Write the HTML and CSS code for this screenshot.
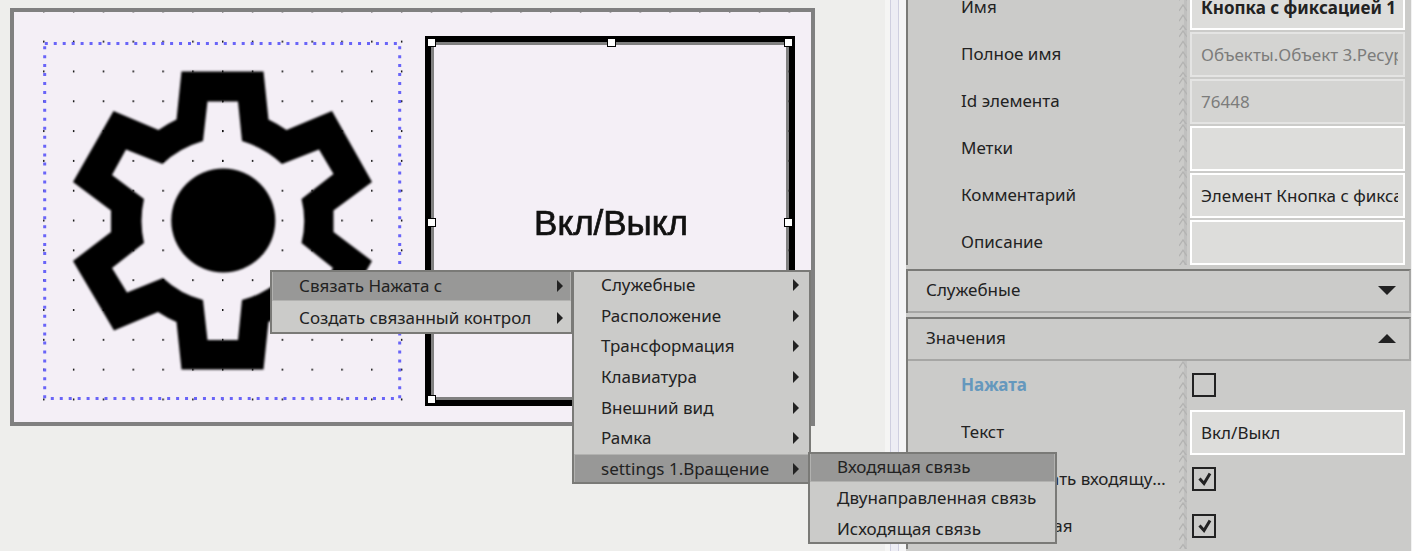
FILE: index.html
```html
<!DOCTYPE html>
<html lang="ru">
<head>
<meta charset="utf-8">
<title>Редактор</title>
<link rel="stylesheet" href="styles.css">
</head>
<body>
<svg class="defs" aria-hidden="true">
  <symbol id="grip" viewBox="0 0 8 47">
    <rect x="5" width="3" height="47" fill="#c0c0bf"/>
    <path fill="none" stroke="#b3b3b2" stroke-width="1.300" d="M0 7L4 1L8 7M0 17.400L4 11.400L8 17.400M0 27.800L4 21.800L8 27.800M0 38.200L4 32.200L8 38.200M0 48L4 42.500L8 48"/>
  </symbol>
</svg>
<div class="app">
  <main class="stage">
    <svg class="surface" width="805" height="418" viewBox="10 8 805 418" role="img" aria-label="Рабочая область">
      <defs>
        <pattern id="dots" x="43.100" y="10.800" width="29.820" height="29.820" patternUnits="userSpaceOnUse">
          <rect width="1.400" height="2" fill="#111"/>
        </pattern>
      </defs>
      <rect x="12" y="10" width="801" height="414" fill="#f4eff6"/>
      <rect x="43" y="40" width="360" height="362" fill="url(#dots)"/>
      <rect x="43" y="11" width="755" height="2" fill="url(#dots)" opacity=".5"/>
      <rect x="12" y="10" width="801" height="414" fill="none" stroke="#808080" stroke-width="4"/>
      <g class="gear">
        <path fill-rule="evenodd" d="M181.500 71.500H263.500L268.500 119.500Q278 124 286.500 130L332 111L372 182L333.500 210.500V232L372 261L332 330.500L286.500 312Q278 318 268.500 322L263.500 369.500H181.500L176.500 322Q167 318 158 312L114 330.500L73 261L111 232V210.500L73 182L113.500 111L158.500 130Q167 124 176.500 119.500ZM207.500 101.500L203 141Q179 148 162.500 164L126 149.500L112 175L144 199Q139 221 144 243L112 268L127 292.500L163 278Q180 294 203 300L207.500 340H238L242 300Q265 294 282 278L319 292L333 268L301.500 243Q307 221 301.500 199L333.500 174L319 149.500L282 164Q265 148 242 141L238 101.500Z"/>
        <circle cx="223.300" cy="220.500" r="52"/>
      </g>
      <rect x="216" y="100" width="12" height="62" fill="url(#dots)"/>
      <g fill="none" stroke="#6964f8" stroke-width="3" stroke-dasharray="3 5.950">
        <path d="M44.800 43.500H398M50.800 398.500H395M44.700 46.200V399M399.700 46.200V399"/>
      </g>
      <rect x="428" y="39" width="364" height="364" fill="#f4eff6" stroke="#000" stroke-width="6"/>
      <rect x="432.500" y="43.500" width="355" height="355" fill="none" stroke="#808080" stroke-width="3"/>
      <rect x="786" y="50" width="5" height="340" fill="url(#dots)"/>
      <text class="caption" x="611" y="235" text-anchor="middle">Вкл/Выкл</text>
      <g fill="#fff" stroke="#000">
        <rect x="427.500" y="38.500" width="8" height="8"/><rect x="607.500" y="38.500" width="8" height="8"/><rect x="784.500" y="38.500" width="8" height="8"/>
        <rect x="427.500" y="218.500" width="8" height="8"/><rect x="784.500" y="218.500" width="8" height="8"/><rect x="427.500" y="395.500" width="8" height="8"/>
      </g>
    </svg>
  </main>
  <div class="splitter"></div>
  <aside class="panel">
    <section class="group first">
      <div class="row"><label for="f1">Имя</label><svg class="grip"><use href="#grip"/></svg><input class="field strong" id="f1" type="text" value="Кнопка с фиксацией 1"></div>
      <div class="row"><label for="f2">Полное имя</label><svg class="grip"><use href="#grip"/></svg><input class="field" id="f2" type="text" value="Объекты.Объект 3.Ресурсы" disabled></div>
      <div class="row"><label for="f3">Id элемента</label><svg class="grip"><use href="#grip"/></svg><input class="field" id="f3" type="text" value="76448" disabled></div>
      <div class="row"><label for="f4">Метки</label><svg class="grip"><use href="#grip"/></svg><input class="field" id="f4" type="text"></div>
      <div class="row"><label for="f5">Комментарий</label><svg class="grip"><use href="#grip"/></svg><input class="field" id="f5" type="text" value="Элемент Кнопка с фиксацией"></div>
      <div class="row"><label for="f6">Описание</label><svg class="grip"><use href="#grip"/></svg><input class="field" id="f6" type="text"></div>
    </section>
    <section class="group">
      <button class="head" type="button">Служебные<svg width="18" height="9" viewBox="0 0 18 9"><path d="M0 0H18L9 9Z"/></svg></button>
    </section>
    <section class="group">
      <button class="head" type="button">Значения<svg width="18" height="9" viewBox="0 0 18 9"><path d="M0 9H18L9 0Z"/></svg></button>
      <div class="row"><label class="linked" for="f7">Нажата</label><svg class="grip"><use href="#grip"/></svg><span class="tick"><input id="f7" type="checkbox"></span></div>
      <div class="row"><label for="f8">Текст</label><svg class="grip"><use href="#grip"/></svg><input class="field" id="f8" type="text" value="Вкл/Выкл"></div>
      <div class="row"><label for="f9">Использовать входящую связь</label><svg class="grip"><use href="#grip"/></svg><span class="tick"><input id="f9" type="checkbox" checked><svg class="mark" viewBox="0 0 24 24"><path d="M7.500 11.500L12 16.500L18 6.500"/></svg></span></div>
      <div class="row"><label for="f10">Управляемая</label><svg class="grip"><use href="#grip"/></svg><span class="tick"><input id="f10" type="checkbox" checked><svg class="mark" viewBox="0 0 24 24"><path d="M7.500 11.500L12 16.500L18 6.500"/></svg></span></div>
    </section>
  </aside>
</div>
<menu class="menu menu-main">
  <li><button class="on" type="button">Связать Нажата с<svg class="arrow" viewBox="0 0 6 12"><path d="M0 0L6 6L0 12Z"/></svg></button></li>
  <li><button type="button">Создать связанный контрол<svg class="arrow" viewBox="0 0 6 12"><path d="M0 0L6 6L0 12Z"/></svg></button></li>
</menu>
<menu class="menu menu-props">
  <li><button type="button">Служебные<svg class="arrow" viewBox="0 0 6 12"><path d="M0 0L6 6L0 12Z"/></svg></button></li>
  <li><button type="button">Расположение<svg class="arrow" viewBox="0 0 6 12"><path d="M0 0L6 6L0 12Z"/></svg></button></li>
  <li><button type="button">Трансформация<svg class="arrow" viewBox="0 0 6 12"><path d="M0 0L6 6L0 12Z"/></svg></button></li>
  <li><button type="button">Клавиатура<svg class="arrow" viewBox="0 0 6 12"><path d="M0 0L6 6L0 12Z"/></svg></button></li>
  <li><button type="button">Внешний вид<svg class="arrow" viewBox="0 0 6 12"><path d="M0 0L6 6L0 12Z"/></svg></button></li>
  <li><button type="button">Рамка<svg class="arrow" viewBox="0 0 6 12"><path d="M0 0L6 6L0 12Z"/></svg></button></li>
  <li><button class="on" type="button">settings 1.Вращение<svg class="arrow" viewBox="0 0 6 12"><path d="M0 0L6 6L0 12Z"/></svg></button></li>
</menu>
<menu class="menu menu-link">
  <li><button class="on" type="button">Входящая связь</button></li>
  <li><button type="button">Двунаправленная связь</button></li>
  <li><button type="button">Исходящая связь</button></li>
</menu>
</body>
</html>
```
FILE: styles.css
```css
* { box-sizing: border-box; }
body {
  margin: 0;
  height: 100vh;
  overflow: hidden;
  background: #eeeeec;
  color: #222;
  font: 17px/24px "Noto Sans", "Open Sans", sans-serif;
}
button, input { font: inherit; color: inherit; }
.defs { position: absolute; width: 0; height: 0; }
.app { display: flex; height: 100%; }
.stage { flex: 1; min-width: 0; padding: 8px 10px; overflow: hidden; }
.surface { display: block; }
.gear { filter: blur(1px); }
.caption { font: 35px "Liberation Sans", sans-serif; fill: #111; stroke: #111; stroke-width: 0.7; filter: blur(0.7px); }
.splitter {
  width: 21px;
  background: linear-gradient(90deg, #f5f5f4 5px, #cfcfe0 5px 6px, #ededf4 6px 13px, #cfcfe0 13px 14px, #f5f5f6 14px);
}
.panel {
  width: 506px;
  flex: none;
  display: flex;
  flex-direction: column;
  gap: 4px;
  background: #cbcbc9;
  border-right: 1px solid #f2f2f2;
  overflow: hidden;
}
.group { border-left: 2px solid #7a7a77; }
.first { margin-top: -17px; }
.head {
  display: flex;
  align-items: center;
  justify-content: space-between;
  width: 100%;
  height: 44px;
  padding: 0 13px 2px 18px;
  text-align: left;
  background: none;
  border: solid #a6a6a4;
  border-width: 2px 2px 2px 0;
  border-top-color: #7a7a77;
}
.head svg { fill: #222; }
.row {
  display: grid;
  grid-template-columns: 1fr 8px 215px;
  column-gap: 3px;
  align-items: center;
  height: 47px;
  padding: 0 6px 0 53px;
}
.row label {
  margin-right: 8px;
  overflow: hidden;
  white-space: nowrap;
  text-overflow: ellipsis;
}
.linked { color: #6598bd; font-weight: 700; }
.grip { display: block; width: 8px; height: 47px; }
.field {
  width: 100%;
  height: 45px;
  margin-top: 2px;
  padding: 0 5px 0 9px;
  border: 2px solid #fff;
  border-radius: 0;
  background: #dddddb;
}
.field:disabled { background: #d4d4d2; border-color: #e4e4e3; color: #7c7c7b; }
.strong { font-weight: 700; }
.tick { display: grid; padding-left: 2px; }
.tick input, .mark { grid-area: 1 / 1; width: 24px; height: 24px; margin: 0; }
.tick input { appearance: none; border: 2px solid #222; }
.mark { pointer-events: none; fill: none; stroke: #222; stroke-width: 3; }
.menu {
  position: absolute;
  display: flex;
  flex-direction: column;
  margin: 0;
  padding: 0;
  list-style: none;
  background: #cbcbc9;
  outline: 2px solid #7a7a77;
  outline-offset: -2px;
}
.menu li { flex: 1; display: flex; padding: 2px 3px; }
.menu button {
  flex: 1;
  display: flex;
  align-items: center;
  justify-content: space-between;
  padding: 0 7px 0 26px;
  border: 0;
  background: none;
  text-align: left;
  white-space: nowrap;
}
.menu .on { background: #989897; box-shadow: 0 0 0 1px #b2b2b0; }
.arrow { width: 6px; height: 12px; fill: #222; }
.menu-main { left: 270px; top: 270px; width: 303px; height: 64px; }
.menu-props { left: 572px; top: 270px; width: 239px; height: 214px; }
.menu-props button { padding-right: 9px; }
.menu-link { left: 808px; top: 452px; width: 249px; height: 92px; }
```
